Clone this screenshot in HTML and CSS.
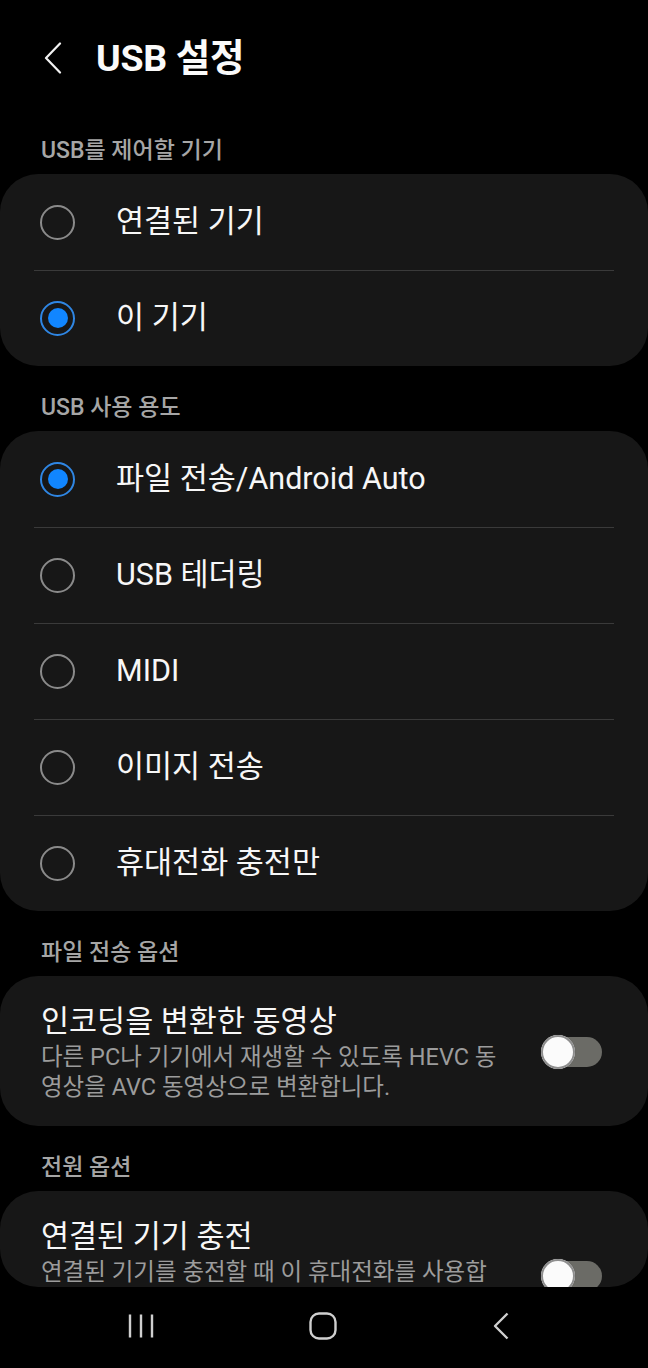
FILE: index.html
```html
<!DOCTYPE html>
<html lang="ko">
<head>
<meta charset="utf-8">
<title>USB 설정</title>
<link rel="stylesheet" href="styles.css">
</head>
<body>
<div class="app">
  <div class="content">
    <header class="header">
      <svg class="back" width="18" height="32" viewBox="0 0 18 32"><path d="M16 1.5 L2 16 L16 30.5" fill="none" stroke="#f2f2f2" stroke-width="2.2" stroke-linecap="round" stroke-linejoin="round"/></svg>
      <h1 class="title">USB 설정</h1>
    </header>

    <div class="label">USB를 제어할 기기</div>
    <section class="card">
      <div class="row"><span class="radio"></span><span class="row-text">연결된 기기</span></div>
      <div class="row"><span class="radio on"></span><span class="row-text">이 기기</span></div>
    </section>

    <div class="label">USB 사용 용도</div>
    <section class="card">
      <div class="row"><span class="radio on"></span><span class="row-text">파일 전송/Android Auto</span></div>
      <div class="row"><span class="radio"></span><span class="row-text">USB 테더링</span></div>
      <div class="row"><span class="radio"></span><span class="row-text">MIDI</span></div>
      <div class="row"><span class="radio"></span><span class="row-text">이미지 전송</span></div>
      <div class="row"><span class="radio"></span><span class="row-text">휴대전화 충전만</span></div>
    </section>

    <div class="label">파일 전송 옵션</div>
    <section class="card switch-card">
      <div class="switch-text">
        <div class="switch-title">인코딩을 변환한 동영상</div>
        <div class="switch-desc">다른 PC나 기기에서 재생할 수 있도록 HEVC 동영상을 AVC 동영상으로 변환합니다.</div>
      </div>
      <div class="toggle"><span class="thumb"></span></div>
    </section>

    <div class="label">전원 옵션</div>
    <section class="card switch-card last">
      <div class="switch-text">
        <div class="switch-title">연결된 기기 충전</div>
        <div class="switch-desc">연결된 기기를 충전할 때 이 휴대전화를 사용합니다.</div>
      </div>
      <div class="toggle"><span class="thumb"></span></div>
    </section>
  </div>

  <nav class="navbar">
    <svg width="26" height="26" viewBox="0 0 26 26"><path d="M2 1.5 V24.5 M13 1.5 V24.5 M24 1.5 V24.5" stroke="#cfcfcf" stroke-width="2.4" fill="none"/></svg>
    <svg width="28" height="28" viewBox="0 0 28 28"><rect x="1.5" y="1.5" width="25" height="25" rx="8.5" fill="none" stroke="#cfcfcf" stroke-width="2.4"/></svg>
    <svg width="18" height="28" viewBox="0 0 18 28"><path d="M15.5 1.5 L3 14 L15.5 26.5" fill="none" stroke="#cfcfcf" stroke-width="2.4" stroke-linejoin="round"/></svg>
  </nav>
</div>
</body>
</html>
```

FILE: styles.css
```css
* { box-sizing: border-box; }

html, body {
  margin: 0;
  padding: 0;
  background: #000;
}

body {
  font-family: "Roboto", "Noto Sans CJK KR", sans-serif;
  color: #f7f7f7;
  width: 648px;
  height: 1368px;
  overflow: hidden;
}

.app {
  display: flex;
  flex-direction: column;
  height: 1368px;
}

.content {
  height: 1287px;
  overflow: hidden;
  border-radius: 0 0 38px 38px;
  flex: none;
}

.header {
  height: 109px;
  display: flex;
  align-items: center;
  padding: 6px 0 0 44px;
}

.back {
  flex: none;
  margin-right: 34px;
}

.title {
  margin: 0;
  font-size: 37.5px;
  font-weight: 700;
  line-height: 44px;
  color: #fafafa;
  letter-spacing: -0.3px;
}

.label {
  padding: 28px 0 9px 41px;
  font-size: 23px;
  line-height: 28px;
  font-weight: 500;
  color: #a6a6a6;
}

.card {
  background: #171717;
  border-radius: 38px;
}

.row {
  height: 96px;
  display: flex;
  align-items: center;
  padding-left: 40px;
  position: relative;
}

.row + .row::before {
  content: "";
  position: absolute;
  left: 34px;
  right: 34px;
  top: 0;
  height: 1px;
  background: #3a3a3a;
}

.radio {
  flex: none;
  width: 35px;
  height: 35px;
  border-radius: 50%;
  border: 2px solid #8a8a8a;
  display: flex;
  align-items: center;
  justify-content: center;
}

.radio.on {
  border-color: #2f86e3;
}

.radio.on::after {
  content: "";
  width: 20px;
  height: 20px;
  border-radius: 50%;
  background: #1186ff;
}

.row-text {
  margin-left: 41px;
  font-size: 30.5px;
  line-height: 38px;
  color: #f7f7f7;
}

.switch-card {
  display: flex;
  align-items: center;
  padding: 26px 46px 24px 41px;
}

.switch-card.last {
  padding-bottom: 70px;
}

.switch-card.last .toggle {
  margin-top: 18px;
}

.switch-text {
  flex: 1;
  min-width: 0;
  padding-right: 34px;
}

.switch-title {
  font-size: 30.5px;
  line-height: 40px;
  color: #f7f7f7;
}

.switch-desc {
  font-size: 23.5px;
  line-height: 30px;
  color: #9c9c9c;
}

.toggle {
  flex: none;
  width: 57px;
  height: 30px;
  margin-left: 4px;
  border-radius: 15px;
  background: #6b6b66;
  display: flex;
  align-items: center;
}

.thumb {
  flex: none;
  width: 34px;
  height: 34px;
  margin-left: -4px;
  border-radius: 50%;
  background: #fbfbfb;
  box-shadow: inset 0 0 0 2px #8e8e8e, 0 0 1px #555;
}

.navbar {
  flex: 1;
  display: flex;
  align-items: center;
  justify-content: center;
  gap: 155px;
  padding: 0 10px 4px 0;
}
```
